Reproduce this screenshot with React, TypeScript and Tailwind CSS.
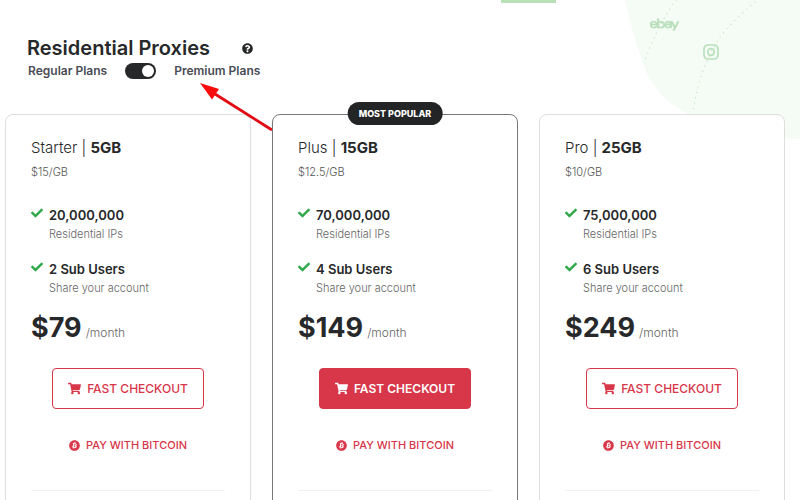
import React, { useState } from "react";
import {
  FaBitcoin,
  FaCheck,
  FaEbay,
  FaQuestionCircle,
  FaShoppingCart,
} from "react-icons/fa";

type Plan = {
  name: string;
  size: string;
  rate: string;
  ips: string;
  users: string;
  price: string;
  popular?: boolean;
};

const plans: Plan[] = [
  { name: "Starter", size: "5GB", rate: "$15/GB", ips: "20,000,000", users: "2 Sub Users", price: "$79" },
  { name: "Plus", size: "15GB", rate: "$12.5/GB", ips: "70,000,000", users: "4 Sub Users", price: "$149", popular: true },
  { name: "Pro", size: "25GB", rate: "$10/GB", ips: "75,000,000", users: "6 Sub Users", price: "$249" },
];

function Feature({ title, note }: { title: string; note: string }) {
  return (
    <li className="flex gap-1.5">
      <FaCheck className="mt-0.5 size-3 shrink-0 text-[#2fa84a]" aria-hidden="true" />
      <div>
        <p className="text-[13px] leading-5 font-semibold">{title}</p>
        <p className="text-[11px] leading-[18px] font-light text-[#666]">{note}</p>
      </div>
    </li>
  );
}

function PlanCard({ plan }: { plan: Plan }) {
  return (
    <article
      className={`relative rounded-lg border bg-white px-[25px] pt-[23px] pb-8 ${
        plan.popular ? "z-20 border-[#777]" : "border-[#dedede]"
      }`}
    >
      {plan.popular && (
        <span className="absolute -top-[13px] left-1/2 -translate-x-1/2 rounded-full bg-[#222425] px-[11px] text-[9px] leading-[23px] font-extrabold whitespace-nowrap text-white">
          MOST POPULAR
        </span>
      )}
      <h2 className="text-[15px] leading-5 font-light">
        {plan.name} | <strong className="font-bold">{plan.size}</strong>
      </h2>
      <p className="mt-1.5 text-[11px] leading-4 font-light text-[#555]">{plan.rate}</p>
      <ul className="mt-[25px] flex flex-col gap-4">
        <Feature title={plan.ips} note="Residential IPs" />
        <Feature title={plan.users} note="Share your account" />
      </ul>
      <p className="mt-[13px] flex items-baseline gap-1">
        <span className="text-[27px] leading-9 font-bold">{plan.price}</span>
        <span className="text-xs font-light text-[#666]">/month</span>
      </p>
      <div className="mt-[22px] flex flex-col items-center">
        <button
          type="button"
          className={`flex h-[41px] w-[152px] items-center justify-center gap-1.5 rounded border border-[#d83649] text-xs whitespace-nowrap ${
            plan.popular ? "bg-[#d83649] font-semibold text-white" : "bg-white font-medium text-[#d83649]"
          }`}
        >
          <FaShoppingCart className="size-[13px]" aria-hidden="true" />
          FAST CHECKOUT
        </button>
        <button
          type="button"
          className="mt-[26px] flex h-5 items-center gap-1.5 text-[11px] font-medium whitespace-nowrap text-[#d83649]"
        >
          <FaBitcoin className="size-[11px]" aria-hidden="true" />
          PAY WITH BITCOIN
        </button>
      </div>
      <hr className="mt-[35px] border-[#f1f1f1]" />
    </article>
  );
}

function Backdrop() {
  return (
    <div className="absolute top-0 right-0 h-[140px] w-[180px]" aria-hidden="true">
      <svg className="absolute inset-0 size-full" viewBox="0 0 180 140" fill="none">
        <path d="M5 0C10 23 16 44 23 63C31 88 47 104 72 116C105 132 145 138 180 139V0Z" fill="#f4fcf5" />
        <path
          d="M56 0C44 17 36 31 24 62M135 2C122 13 108 26 98 40C86 58 77 84 73 112"
          stroke="#c4e3c7"
          strokeWidth="1.4"
          strokeLinecap="round"
          strokeDasharray="0 5.5"
        />
      </svg>
      <FaEbay className="absolute top-[10px] left-[30px] size-[29px] stroke-current text-[#b7ddba]" strokeWidth="14" />
      <svg className="absolute top-[44px] left-[83px] size-4" viewBox="0 0 16 16" fill="none" stroke="#b9dfbc" strokeWidth="1.7">
        <rect x="1" y="1" width="14" height="14" rx="4" />
        <circle cx="8" cy="8" r="3.3" />
        <circle cx="12" cy="4" r=".2" strokeWidth="1" />
      </svg>
    </div>
  );
}

export default function App() {
  const [premium, setPremium] = useState(true);
  return (
    <main className="relative min-h-screen overflow-hidden bg-white font-['Inter','Liberation_Sans',sans-serif] text-[#26282a]">
      <Backdrop />
      <div className="absolute top-0 left-[501px] h-[3px] w-[55px] bg-[#b9dfb7]" />
      <header className="relative px-[27px] pt-9">
        <div className="flex h-6 items-center gap-8">
          <h1 className="text-xl leading-6 font-semibold">Residential Proxies</h1>
          <button type="button" aria-label="About residential proxies">
            <FaQuestionCircle className="size-[11px]" />
          </button>
        </div>
        <div className="mt-[3px] flex h-4 items-center gap-[18px] pl-px text-xs font-semibold text-[#4a4c55]">
          <span>Regular Plans</span>
          <label className="relative block h-4 w-[31px]">
            <input
              type="checkbox"
              role="switch"
              aria-label="Premium plans"
              checked={premium}
              onChange={(e) => setPremium(e.target.checked)}
              className="peer block h-4 w-[31px] appearance-none rounded-full bg-[#26282a]"
            />
            <span className="pointer-events-none absolute top-0.5 left-0.5 size-3 rounded-full bg-white peer-checked:left-[17px]" />
          </label>
          <span>Premium Plans</span>
        </div>
      </header>
      <svg className="absolute top-20 left-[196px] z-10 h-[54px] w-20" viewBox="0 0 80 54" aria-hidden="true">
        <path d="M19 14L76 50" stroke="#e30b13" strokeWidth="2.8" />
        <path d="M4 3L23 9L16 19.500Z" fill="#f80b0b" />
      </svg>
      <section className="mt-[35px] grid grid-cols-3 gap-[21px] pr-[15px] pl-[5px]">
        {plans.map((plan) => (
          <PlanCard key={plan.name} plan={plan} />
        ))}
      </section>
    </main>
  );
}
